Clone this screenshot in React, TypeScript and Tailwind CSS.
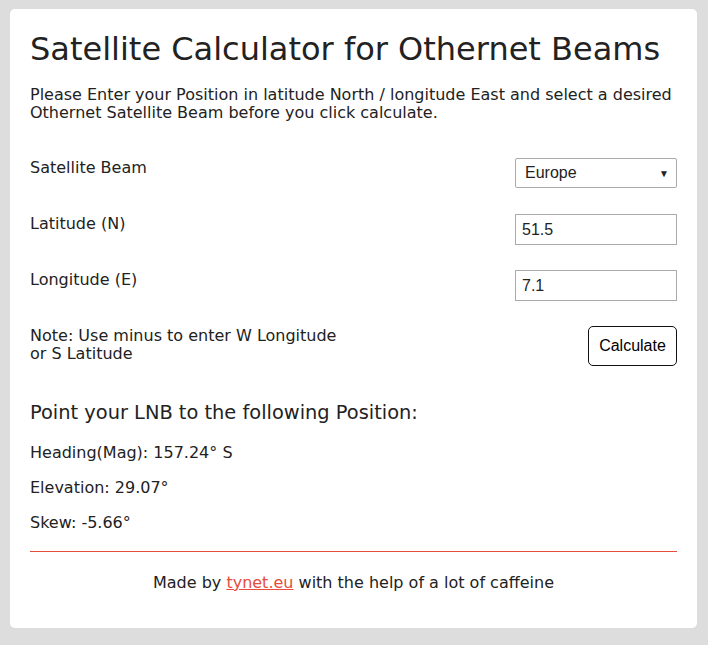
import React from "react";

export default function App() {
  const font = { fontFamily: '"DejaVu Sans", Verdana, sans-serif' };
  const arial = { fontFamily: '"Liberation Sans", Arial, sans-serif' };
  return (
    <div className="min-h-[645px] bg-[#dddddd] pt-[9px] pl-[10px] pr-[11px] pb-[17px]" style={font}>
      <div className="bg-white rounded-[5px] px-5 pt-[20px] pb-[36px] text-[#222222]">
        <h1 className="text-[32px] leading-[40px] m-0 font-normal">Satellite Calculator for Othernet Beams</h1>
        <p className="text-[16px] leading-[18px] mt-[17px]">
          Please Enter your Position in latitude North / longitude East and select a desired Othernet Satellite Beam before you click calculate.
        </p>
        <div className="mt-[36px] flex flex-col">
          <div className="flex justify-between items-start h-[56px]">
            <span className="text-[16px] leading-[18px] pt-[1px]">Satellite Beam</span>
            <div className="relative w-[162px] h-[30px] border border-[#aaaaaa] rounded-[2px] flex items-center pl-[9px]" style={arial}>
              <span className="text-[16px]">Europe</span>
              <span className="absolute right-[7px] top-[7px] text-[10px]">▼</span>
            </div>
          </div>
          <div className="flex justify-between items-start h-[56px]">
            <span className="text-[16px] leading-[18px] pt-[1px]">Latitude (N)</span>
            <div className="w-[162px] h-[31px] border border-[#aaaaaa] flex items-center pl-[6px] text-[16px]" style={arial}>51.5</div>
          </div>
          <div className="flex justify-between items-start h-[56px]">
            <span className="text-[16px] leading-[18px] pt-[1px]">Longitude (E)</span>
            <div className="w-[162px] h-[31px] border border-[#aaaaaa] flex items-center pl-[6px] text-[16px]" style={arial}>7.1</div>
          </div>
          <div className="flex justify-between items-start">
            <span className="text-[16px] leading-[18px] pt-[1px]">Note: Use minus to enter W Longitude<br />or S Latitude</span>
            <button className="w-[89px] h-[40px] border border-[#111111] rounded-[5px] bg-white text-[16px] text-black" style={arial}>Calculate</button>
          </div>
        </div>
        <h2 className="text-[19.4px] leading-[22px] mt-[36px] font-normal">Point your LNB to the following Position:</h2>
        <p className="text-[16px] leading-[18px] mt-[20px]">Heading(Mag): 157.24° S</p>
        <p className="text-[16px] leading-[18px] mt-[17px]">Elevation: 29.07°</p>
        <p className="text-[16px] leading-[18px] mt-[17px]">Skew: -5.66°</p>
        <hr className="mt-[19px] border-0 border-t border-solid border-t-[#e74c3c]" />
        <p className="text-[16px] leading-[18px] mt-[22px] text-center">
          Made by <a className="text-[#e74c3c] underline">tynet.eu</a> with the help of a lot of caffeine
        </p>
      </div>
    </div>
  );
}
